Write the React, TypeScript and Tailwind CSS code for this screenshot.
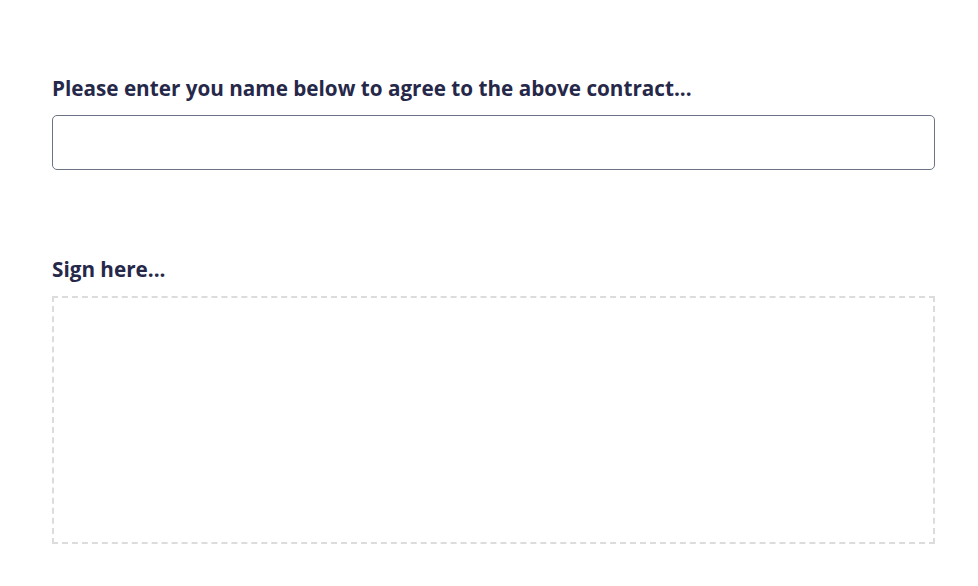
import React, { useState } from "react";

export default function App() {
  const [name, setName] = useState("");

  return (
    <div className="min-h-screen bg-white pl-[52px] pr-[43px] pt-[73px] font-['Open_Sans',sans-serif]">
      <label className="block text-[20.7px] font-bold leading-[30px] text-[#26284a]">
        Please enter you name below to agree to the above contract...
      </label>
      <input
        type="text"
        value={name}
        onChange={(e) => setName(e.target.value)}
        className="mt-[12px] block h-[55px] w-full rounded-[5px] border border-[#6b7385] px-3 outline-none"
      />

      <label className="mt-[84px] block text-[20.7px] font-bold leading-[30px] text-[#26284a]">
        Sign here...
      </label>
      <div className="mt-[12px] h-[248px] w-full border-2 border-dashed border-[#dcdcdc]" />
    </div>
  );
}
